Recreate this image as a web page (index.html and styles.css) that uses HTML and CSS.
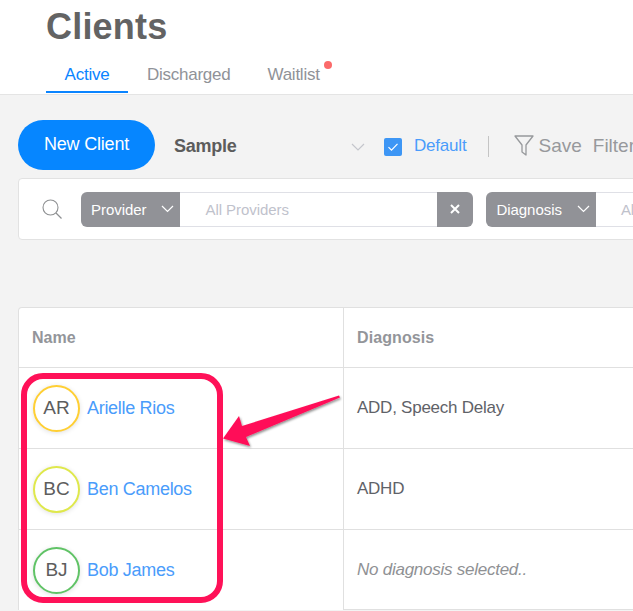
FILE: index.html
```html
<!DOCTYPE html>
<html lang="en">
<head>
<meta charset="utf-8">
<title>Clients</title>
<link rel="stylesheet" href="styles.css">
</head>
<body>
<div class="page">
  <header class="head">
    <h1 class="title">Clients</h1>
    <nav class="tabs">
      <a class="tab tab-active">Active</a>
      <a class="tab tab-discharged">Discharged</a>
      <a class="tab tab-dot">Waitlist</a>
    </nav>
  </header>
  <main class="main">
    <div class="toolbar">
      <button class="new-btn">New Client</button>
      <div class="sample"><span>Sample</span>
        <svg class="sample-chev" width="14" height="8" viewBox="0 0 14 8"><path d="M1 1l6 6 6-6" fill="none" stroke="#c4c6cc" stroke-width="1.2"/></svg>
      </div>
      <span class="check"><svg width="12" height="10" viewBox="0 0 12 10"><path d="M1.5 5.2l3 3 6-6.4" fill="none" stroke="#fff" stroke-width="1.2"/></svg></span>
      <span class="default">Default</span>
      <span class="vline"></span>
      <svg class="funnel" width="20" height="22" viewBox="0 0 20 22"><path d="M1 1h18l-7 9v10l-4-3v-7z" fill="none" stroke="#97999c" stroke-width="1.3" stroke-linejoin="round"/></svg>
      <span class="save">Save</span>
      <span class="filter">Filter</span>
    </div>
    <section class="filters">
      <svg class="search" width="22" height="22" viewBox="0 0 22 22"><circle cx="9.5" cy="9.5" r="7.5" fill="none" stroke="#8e9092" stroke-width="1.1"/><path d="M15 15l5.500 5.500" stroke="#8e9092" stroke-width="1.300"/></svg>
      <div class="fgroup">
        <span class="flabel">Provider <svg width="13" height="8" viewBox="0 0 13 8"><path d="M1 1l5.500 5.500 5.500-5.500" fill="none" stroke="#fff" stroke-width="1.200"/></svg></span>
        <span class="finput">All Providers</span>
        <span class="fclear"><svg width="10" height="10" viewBox="0 0 10 10"><path d="M1 1l8 8M9 1l-8 8" fill="none" stroke="#fff" stroke-width="2"/></svg></span>
      </div>
      <div class="fgroup">
        <span class="flabel">Diagnosis <svg width="13" height="8" viewBox="0 0 13 8"><path d="M1 1l5.500 5.500 5.500-5.500" fill="none" stroke="#fff" stroke-width="1.200"/></svg></span>
        <span class="finput">All Diagnoses</span>
      </div>
    </section>
    <section class="table">
      <div class="row row-head">
        <div class="cell cell-name">Name</div>
        <div class="cell cell-diag">Diagnosis</div>
      </div>
      <div class="row">
        <div class="cell cell-name"><span class="avatar av-yellow">AR</span><a class="link">Arielle Rios</a></div>
        <div class="cell cell-diag">ADD, Speech Delay</div>
      </div>
      <div class="row">
        <div class="cell cell-name"><span class="avatar av-lime">BC</span><a class="link">Ben Camelos</a></div>
        <div class="cell cell-diag">ADHD</div>
      </div>
      <div class="row">
        <div class="cell cell-name"><span class="avatar av-green">BJ</span><a class="link">Bob James</a></div>
        <div class="cell cell-diag cell-none">No diagnosis selected..</div>
      </div>
    </section>
  </main>
  <div class="callout"></div>
  <svg class="arrow" width="130" height="60" viewBox="0 0 130 60">
    <defs><filter id="sh" x="-10%" y="-20%" width="120%" height="150%"><feDropShadow dx="1" dy="1.500" stdDeviation="1" flood-color="#000" flood-opacity=".45"/></filter></defs>
    <path d="M2 43.500L18 21 21 31 118 0.500 119 2.500 25 42 29 51z" fill="#ff1158" filter="url(#sh)"/>
  </svg>
</div>
</body>
</html>
```

FILE: styles.css
```css
* { box-sizing: border-box; }
html, body { margin: 0; padding: 0; }
body { font-family: "Liberation Sans", Arial, sans-serif; color: #555; background: #f3f3f3; }
.page { position: relative; width: 633px; height: 611px; overflow: hidden; }

.head { height: 95px; background: #fff; border-bottom: 1px solid #e4e4e4; padding-left: 46px; }
.title { margin: 0; height: 56px; font-size: 36px; line-height: 54px; font-weight: 700; color: #636363; letter-spacing: .2px; }
.tabs { display: flex; height: 38px; }
.tab { display: block; height: 37px; font-size: 17px; line-height: 37px; color: #909298; letter-spacing: -.25px; margin-right: 37px; }
.tab-active { width: 82px; margin-right: 19px; text-align: center; color: #0a84ff; border-bottom: 2px solid #0a84ff; }
.tab-dot { position: relative; }
.tab-dot::after { content: ""; position: absolute; left: 56px; top: 5px; width: 8px; height: 8px; border-radius: 50%; background: #fb6a6a; }

.main { padding: 25px 0 0 18px; }
.toolbar { display: flex; align-items: center; height: 50px; white-space: nowrap; }
.toolbar > * { flex: none; }
.new-btn { width: 137px; height: 50px; border: 0; border-radius: 25px; background: #0686ff; color: #fff; font: 18px/1 "Liberation Sans", Arial, sans-serif; letter-spacing: -.2px; padding: 0 0 3px; }
.sample { display: flex; align-items: center; width: 229px; padding: 3px 0 0 19px; font-size: 18px; font-weight: 700; letter-spacing: -.25px; color: #5c5c5c; }
.sample span { width: 177px; }
.check { display: flex; align-items: center; justify-content: center; width: 18px; height: 18px; margin-top: 3px; border-radius: 2px; background: #3d96f5; }
.default { margin: 2px 0 0 12px; font-size: 17px; color: #4a9cfb; letter-spacing: -.2px; }
.vline { width: 1px; height: 21px; margin: 3px 0 0 22px; background: #c4c4c4; }
.funnel { margin: 1px 0 0 25px; }
.save { margin: 1px 0 0 4px; font-size: 19px; color: #97999c; }
.filter { margin: 1px 0 0 11px; font-size: 19px; color: #97999c; }

.filters { display: flex; align-items: center; width: 640px; height: 62px; margin-top: 8px; padding-left: 22px; background: #fff; border: 1px solid #e2e2e2; border-radius: 4px; white-space: nowrap; }
.search { flex: none; margin-right: 18px; }
.fgroup { display: flex; flex: none; height: 35px; margin-right: 13px; font-size: 15px; letter-spacing: -.05px; }
.flabel { display: flex; align-items: center; gap: 15px; padding: 0 6px 0 10px; height: 35px; background: #919297; color: #fff; border-radius: 6px 0 0 6px; }
.finput { display: block; width: 257px; height: 35px; line-height: 34px; padding-left: 25px; background: #fff; border-top: 1px solid #dfe0e6; border-bottom: 1px solid #dfe0e6; color: #bfc2cc; }
.fclear { display: flex; align-items: center; justify-content: center; width: 36px; height: 35px; background: #919297; border-radius: 0 6px 6px 0; }

.table { width: 640px; margin-top: 67px; background: #fff; border: 1px solid #e0e0e0; border-bottom: 0; border-radius: 4px 0 0 0; }
.row { display: flex; height: 81px; border-top: 1px solid #e0e0e0; }
.row-head { height: 59px; border-top: 0; font-weight: 700; font-size: 16px; color: #93959a; }
.cell { display: flex; align-items: center; white-space: nowrap; }
.cell-name { width: 325px; padding-left: 14px; border-right: 1px solid #e0e0e0; gap: 7px; }
.row-head .cell-name { padding: 1px 0 0 13px; }
.cell-diag { padding-left: 13px; flex: 1; font-size: 17px; letter-spacing: -.25px; color: #5f6268; }
.row-head .cell-diag { font-size: 16px; color: #93959a; letter-spacing: .1px; }
.cell-none { font-style: italic; color: #8f9194; border-bottom: 1px solid #e0e0e0; }
.avatar { display: flex; align-items: center; justify-content: center; flex: none; width: 47px; height: 47px; border-radius: 50%; border: 2px solid; font-size: 19px; color: #5d5d5d; background: #fff; box-shadow: 0 1px 5px rgba(0,0,0,.12); }
.av-yellow { border-color: #ffcf33; }
.av-lime { border-color: #dfe84b; }
.av-green { border-color: #60c366; }
.link { font-size: 18px; color: #4a9cfb; letter-spacing: -.3px; }

.callout { position: absolute; left: 21px; top: 373px; width: 202px; height: 230px; border: 6px solid #ff1158; border-radius: 22px; }
.arrow { position: absolute; left: 221px; top: 395px; }
```
